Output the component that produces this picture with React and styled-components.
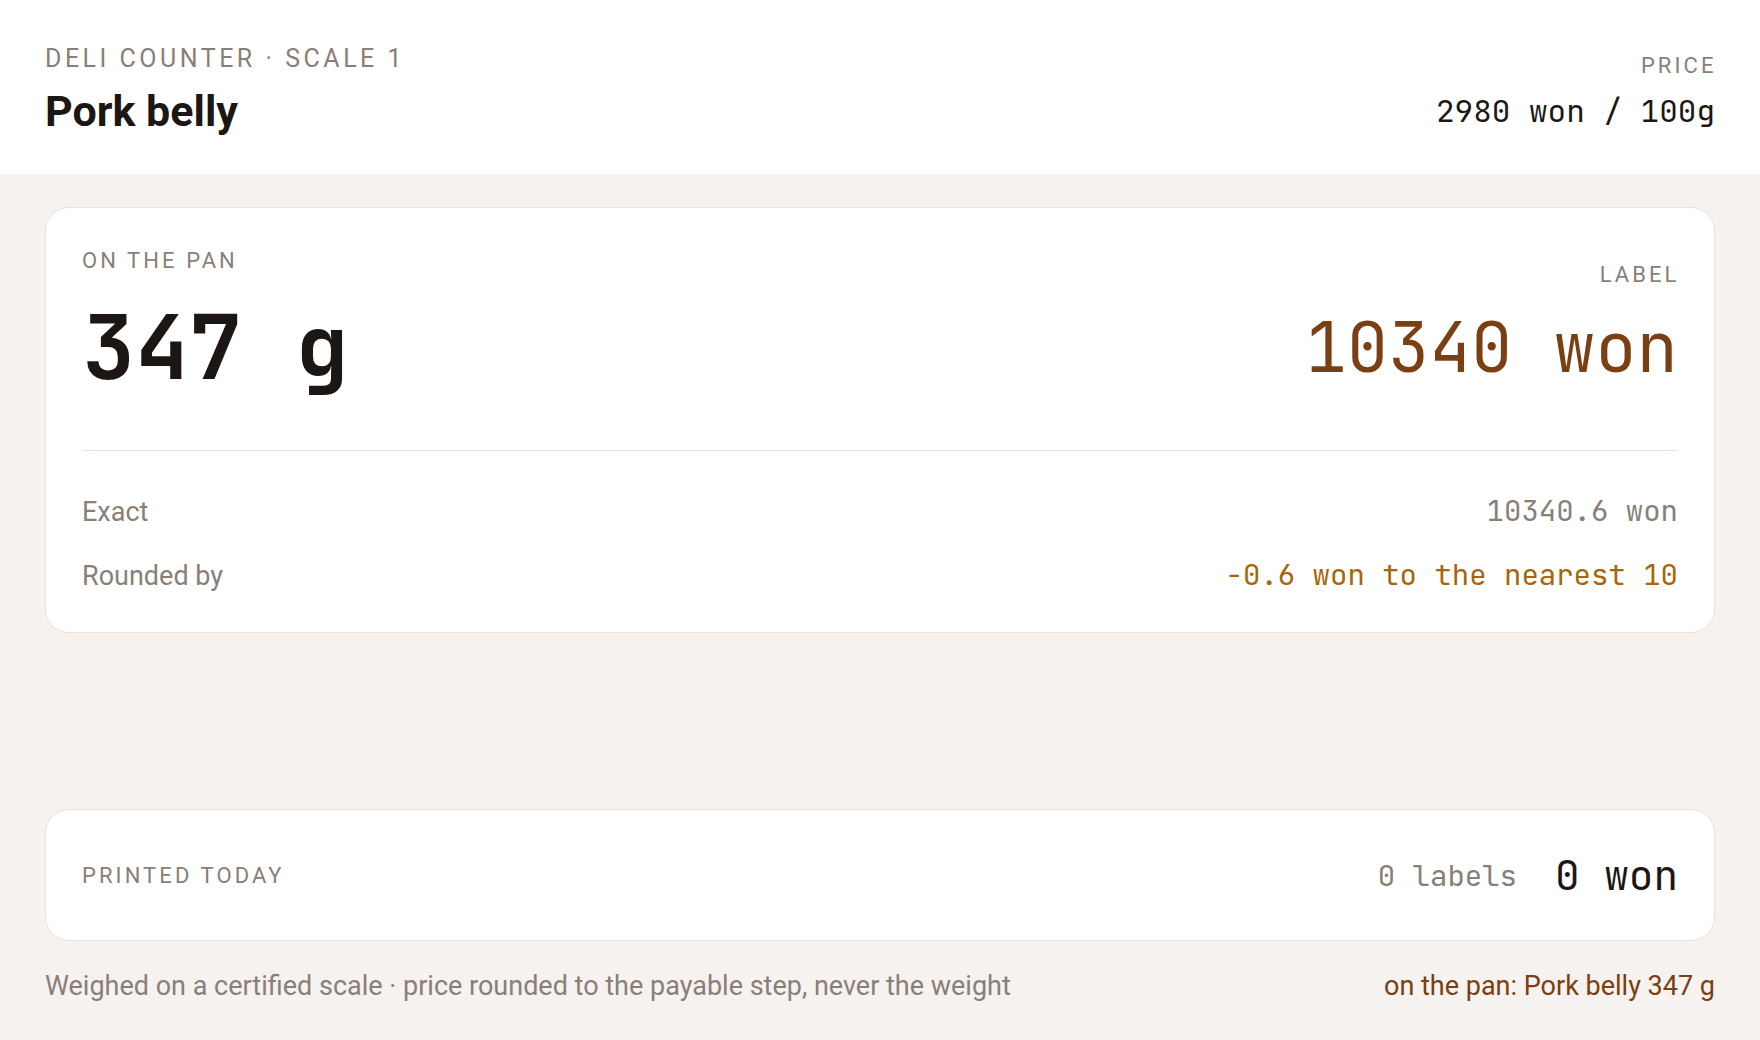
import React from "react";
import styled, { createGlobalStyle } from "styled-components";

const MONO = `"JetBrains Mono", "DejaVu Sans Mono", "Liberation Mono", monospace`;
const SANS = `Roboto, "Liberation Sans", Arial, sans-serif`;

const C = {
  page: "#f5f2ef",
  ink: "#1c1714",
  muted: "#8a7f78",
  line: "#e8e2dc",
  brown: "#7a3f12",
  amber: "#a8650a",
};

const GlobalStyle = createGlobalStyle`
  * { box-sizing: border-box; }
  html, body { margin: 0; padding: 0; }
  body {
    background: ${C.page};
    font-family: ${SANS};
    color: ${C.ink};
    -webkit-font-smoothing: antialiased;
  }
`;

const Page = styled.div`
  min-height: 100vh;
  display: flex;
  flex-direction: column;
`;

const Header = styled.header`
  height: 174px;
  background: #ffffff;
  display: flex;
  justify-content: space-between;
  align-items: center;
  padding: 2px 45px 0;
`;

const Stack = styled.div`
  display: flex;
  flex-direction: column;
  align-items: ${(p) => (p.$align === "end" ? "flex-end" : "flex-start")};
  gap: ${(p) => p.$gap}px;
  padding-top: ${(p) => p.$offset || 0}px;
`;

const Eyebrow = styled.div`
  font-family: ${SANS};
  font-size: ${(p) => p.$size || 22}px;
  line-height: 1.5;
  letter-spacing: 0.14em;
  text-transform: uppercase;
  color: ${C.muted};
  margin-right: ${(p) => (p.$align === "end" ? "-0.07em" : "0")};
`;

const Title = styled.h1`
  margin: 0;
  font-family: ${SANS};
  font-weight: 700;
  font-size: 43px;
  line-height: 1.172;
  color: ${C.ink};
`;

const Mono = styled.div`
  font-family: ${MONO};
  font-size: ${(p) => p.$size}px;
  font-weight: ${(p) => p.$weight || 400};
  color: ${(p) => p.$color || C.ink};
  line-height: ${(p) => p.$lh || "normal"};
  white-space: pre;
`;

const Main = styled.main`
  flex: 1;
  display: flex;
  flex-direction: column;
  padding: 33px 45px 34px;
`;

const Card = styled.section`
  background: #ffffff;
  border: 1px solid ${C.line};
  border-radius: 24px;
  padding: 36px;
`;

const Readout = styled.div`
  display: flex;
  justify-content: space-between;
  align-items: center;
  padding-bottom: 44px;
  border-bottom: 1px solid ${C.line};
`;

const Rows = styled.div`
  display: flex;
  flex-direction: column;
  gap: 23px;
  padding-top: 40px;
`;

const Row = styled.div`
  display: flex;
  justify-content: space-between;
  align-items: baseline;
  line-height: 39px;
`;

const RowLabel = styled.span`
  font-family: ${SANS};
  font-size: 27px;
  color: ${C.muted};
`;

const TallyCard = styled(Card)`
  margin-top: auto;
  display: flex;
  justify-content: space-between;
  align-items: center;
  padding: 38px 36px;
`;

const Tally = styled.div`
  display: flex;
  align-items: center;
  gap: 38px;
`;

const Footer = styled.footer`
  margin-top: 27px;
  display: flex;
  justify-content: space-between;
  align-items: baseline;
  font-family: ${SANS};
  font-size: 27px;
  line-height: 1.4;
`;

const FootNote = styled.span`
  color: ${(p) => p.$color || C.muted};
`;

export default function App() {
  const product = "Pork belly";
  const grams = 347;
  const pricePer100 = 2980;
  const exact = (grams * pricePer100) / 100;
  const rounded = Math.round(exact / 10) * 10;
  const diff = (rounded - exact).toFixed(1);

  return (
    <Page>
      <GlobalStyle />
      <Header>
        <Stack $gap={8}>
          <Eyebrow $size={25}>Deli counter · Scale 1</Eyebrow>
          <Title>{product}</Title>
        </Stack>
        <Stack $align="end" $gap={8} $offset={4}>
          <Eyebrow $align="end">Price</Eyebrow>
          <Mono $size={31}>{`${pricePer100} won / 100g`}</Mono>
        </Stack>
      </Header>

      <Main>
        <Card>
          <Readout>
            <Stack $gap={11}>
              <Eyebrow>On the pan</Eyebrow>
              <Mono $size={89} $weight={700}>{`${grams} g`}</Mono>
            </Stack>
            <Stack $align="end" $gap={11}>
              <Eyebrow $align="end">Label</Eyebrow>
              <Mono $size={69} $color={C.brown}>{`${rounded} won`}</Mono>
            </Stack>
          </Readout>
          <Rows>
            <Row>
              <RowLabel>Exact</RowLabel>
              <Mono $size={29} $color={C.muted} $lh="39px">{`${exact.toFixed(1)} won`}</Mono>
            </Row>
            <Row>
              <RowLabel>Rounded by</RowLabel>
              <Mono $size={29} $color={C.amber} $lh="39px">{`${diff} won to the nearest 10`}</Mono>
            </Row>
          </Rows>
        </Card>

        <TallyCard>
          <Eyebrow>Printed today</Eyebrow>
          <Tally>
            <Mono $size={29} $color={C.muted}>0 labels</Mono>
            <Mono $size={41}>0 won</Mono>
          </Tally>
        </TallyCard>

        <Footer>
          <FootNote>Weighed on a certified scale · price rounded to the payable step, never the weight</FootNote>
          <FootNote $color={C.brown}>{`on the pan: ${product} ${grams} g`}</FootNote>
        </Footer>
      </Main>
    </Page>
  );
}
